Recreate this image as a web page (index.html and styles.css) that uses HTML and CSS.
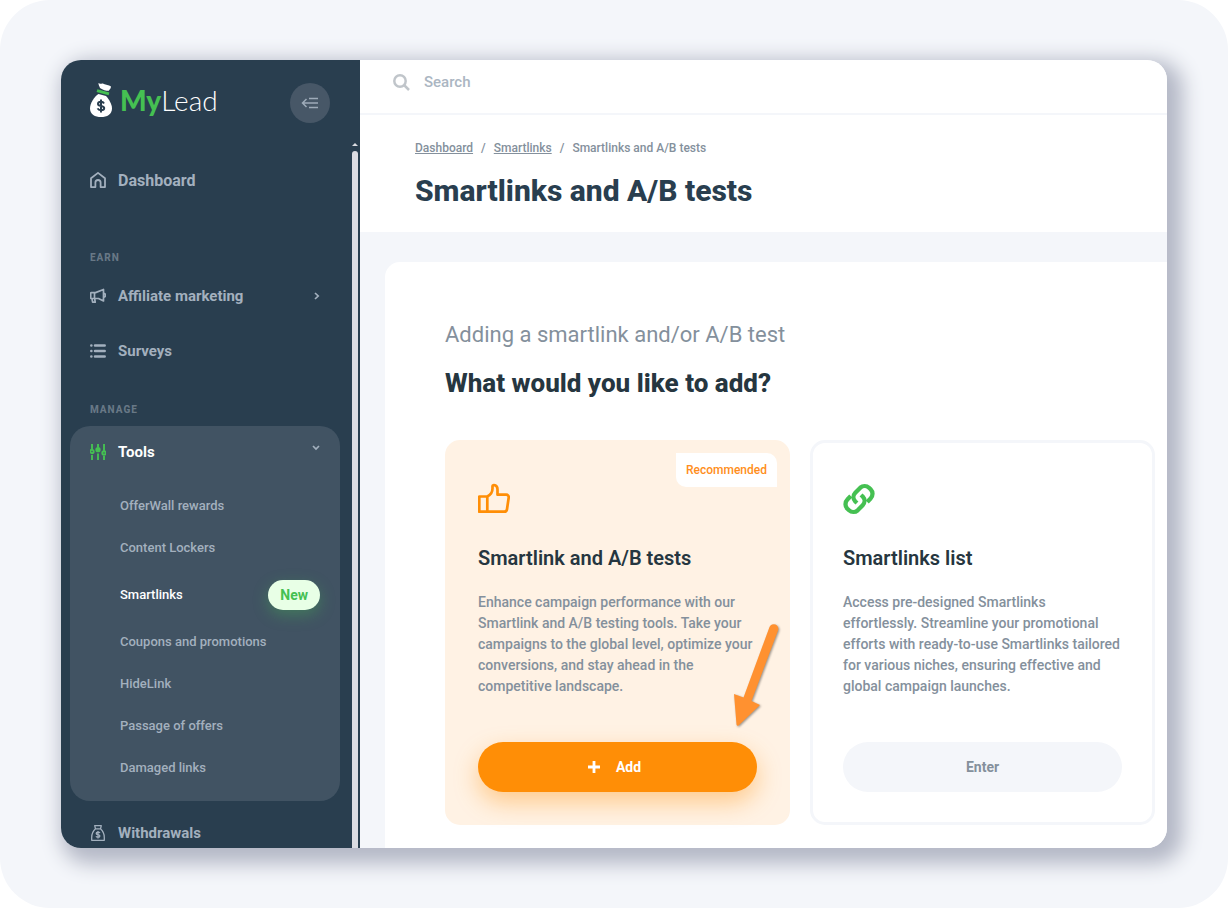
FILE: index.html
```html
<!DOCTYPE html>
<html lang="en">
<head>
  <meta charset="UTF-8">
  <meta name="viewport" content="width=device-width, initial-scale=1.0">
  <title>Smartlinks and A/B tests</title>
  <link rel="stylesheet" href="styles.css">
</head>
<body>
  <div class="backdrop">
    <div class="app">
      <aside class="sidebar">
        <div class="sidebar-head">
          <a href="#" class="logo">
            <svg width="22" height="34" viewBox="0 0 22 34">
              <path fill="#fff" d="M8.500 0c1.800 1.800 3.300-.3 5.300.9 2.200 1.200 4.700.4 7.200 2.500-.2 2.300-1.400 2.600-2.200 4.300-3 0-5.800-.6-8.800-2.800C9.800 3.200 8.300 2.300 8.500 0z"/>
              <path fill="#45c052" d="M7.400 6.200l12 3.200-.8 2.800-12-3.200z"/>
              <path fill="#fff" d="M8.500 11l7.500 2c3 3.500 6 8 6 12.500 0 6-5 8.500-11 8.500S0 31.500 0 25.500C0 20 4.500 13.500 8.500 11z"/>
              <path fill="none" stroke="#2a3e4f" stroke-width="2" d="M14 20.500c-.6-1.200-1.700-1.700-3-1.700-1.800 0-3 .9-3 2.100 0 3 6.200 1.200 6.200 4.200 0 1.300-1.300 2.200-3.200 2.200-1.600 0-2.800-.6-3.400-1.900M11 16.500v13"/>
            </svg>
            <span class="logo-text"><b>My</b>Lead</span>
          </a>
          <button type="button" class="collapse" aria-label="Collapse menu">
            <svg width="18" height="12" viewBox="0 0 18 12" fill="none" stroke="#9eabb9" stroke-width="1.500">
              <path d="M8 1.500h9M1.500 6H17M8 10.500h9M5.500 2L1.500 6l4 4"/>
            </svg>
          </button>
        </div>

        <nav class="nav">
          <a href="#" class="nav-link nav-home">
            <svg width="16" height="16" viewBox="0 0 16 16" fill="none" stroke="currentColor" stroke-width="1.800" stroke-linejoin="round">
              <path d="M1 6.300L8 .9l7 5.400v8.800h-4.400v-4.500a2.600 2.600 0 0 0-5.200 0v4.500H1z"/>
            </svg>
            Dashboard
          </a>

          <p class="nav-label">Earn</p>
          <a href="#" class="nav-link">
            <svg width="16" height="16" viewBox="0 0 16 16" fill="none" stroke="currentColor" stroke-width="1.700" stroke-linejoin="round">
              <path d="M13.500 1.500v11.500L8.500 10.500H1.300a.6.6 0 0 1-.6-.6V5.200c0-.4.300-.6.6-.6h4.200zM4.500 4.800v5.500M2 10.800l.6 3.400h2.600l-.5-3.400M14 5.300c2 .5 2 3.400 0 4"/>
            </svg>
            Affiliate marketing
            <svg class="chevron" width="6" height="8" viewBox="0 0 6 8" fill="none" stroke="currentColor" stroke-width="1.700"><path d="M1 1l3.200 3L1 7"/></svg>
          </a>
          <a href="#" class="nav-link">
            <svg width="16" height="16" viewBox="0 0 16 16" fill="none" stroke="currentColor" stroke-width="2.500" stroke-linecap="round">
              <path d="M5 2.500h9.700M5 8h9.700M5 13.500h9.700M1.300 2.500h.1M1.300 8h.1M1.300 13.500h.1"/>
            </svg>
            Surveys
          </a>

          <p class="nav-label">Manage</p>
          <div class="tools">
            <a href="#" class="nav-link active">
              <svg width="16" height="16" viewBox="0 0 16 16" fill="none" stroke="#45c052" stroke-width="1.900">
                <path d="M2 0v6M2 11V16M8 0v3.500M8 9.500V16M14 0v7M14 12V16"/>
                <circle cx="2" cy="7.500" r="1.700"/><circle cx="8" cy="5.700" r="1.700" fill="#45c052"/><circle cx="14" cy="9" r="1.700"/>
              </svg>
              Tools
              <svg class="chevron down" width="8" height="6" viewBox="0 0 8 6" fill="none" stroke="#a3b0be" stroke-width="1.700"><path d="M1 1l3 3 3-3"/></svg>
            </a>
            <ul class="subnav">
              <li><a href="#">OfferWall rewards</a></li>
              <li><a href="#">Content Lockers</a></li>
              <li><a href="#" class="active">Smartlinks <span class="badge">New</span></a></li>
              <li><a href="#">Coupons and promotions</a></li>
              <li><a href="#">HideLink</a></li>
              <li><a href="#">Passage of offers</a></li>
              <li><a href="#">Damaged links</a></li>
            </ul>
          </div>
          <a href="#" class="nav-link">
            <svg width="16" height="16" viewBox="0 0 16 16" fill="none" stroke="currentColor" stroke-width="1.300" stroke-linejoin="round">
              <path d="M5.500 3.800L4.700.7h6.600l-.8 3.100zM5.500 3.800C3 6 1.700 9 1.700 12.500v2.800h12.600v-2.800c0-3.500-1.300-6.500-3.800-8.700"/>
              <path d="M9.900 8c-.3-.6-1-.9-1.900-.9-2.300 0-2.500 2.200 0 2.500 2.600.3 2.400 2.700 0 2.700-1 0-1.700-.4-2-1M8 6v7.400"/>
            </svg>
            Withdrawals
          </a>
        </nav>
        <div class="scrollbar"></div>
      </aside>

      <main class="main">
        <div class="search">
          <svg width="17" height="17" viewBox="0 0 17 17" fill="none" stroke="#c0c5ca" stroke-width="2.500">
            <circle cx="7" cy="7" r="5.700"/><path d="M11 11l5 5"/>
          </svg>
          <input type="search" placeholder="Search" aria-label="Search">
        </div>

        <header class="page-head">
          <nav class="breadcrumbs">
            <a href="#">Dashboard</a><i>/</i><a href="#">Smartlinks</a><i>/</i><span>Smartlinks and A/B tests</span>
          </nav>
          <h1>Smartlinks and A/B tests</h1>
        </header>

        <section class="panel">
          <p class="lead">Adding a smartlink and/or A/B test</p>
          <h2>What would you like to add?</h2>

          <div class="cards">
            <article class="card recommended">
              <span class="ribbon">Recommended</span>
              <svg width="32" height="32" viewBox="0 0 32 32" fill="none" stroke="#ff8e06" stroke-width="2.700" stroke-linejoin="round">
                <path d="M1.300 13.500h8v15.200h-8zM9.300 13.500c3-1.500 5.200-4.500 5.200-8V3.200c0-2 5-1.500 5 3.300v5.200h8.800c1.500 0 2.600 1.300 2.400 2.800L29 26.200c-.2 1.500-1.400 2.500-2.900 2.500H9.300z"/>
              </svg>
              <h3>Smartlink and A/B tests</h3>
              <p>Enhance campaign performance with our Smartlink and A/B testing tools. Take your campaigns to the global level, optimize your conversions, and stay ahead in the competitive landscape.</p>
              <button type="button" class="btn btn-primary">
                <svg width="12" height="12" viewBox="0 0 12 12" fill="none" stroke="#fff" stroke-width="2.800"><path d="M6 0v12M0 6h12"/></svg>
                Add
              </button>
              <svg class="arrow" width="50" height="110" viewBox="0 0 50 110" fill="#ff9130">
                <path d="M40.500 6A4.500 4.500 0 0 1 49 9.500L22.500 80l8.500 4-21.500 20.500a1.500 1.500 0 0 1-2-1L5 73l9.500 3.500z"/>
              </svg>
            </article>

            <article class="card">
              <svg width="32" height="32" viewBox="0 0 32 32" fill="none" stroke="#45c052" stroke-width="4.300">
                <path d="M7.800 13l-3.400 3.600a6.500 6.500 0 0 0 0 9.200l1.600 1.500a6.500 6.500 0 0 0 8.700 0l5-5.100a6.200 6.200 0 0 0 0-8.700L18 12"/>
                <path d="M24.200 19l3.400-3.600a6.500 6.500 0 0 0 0-9.200L26 4.700a6.500 6.500 0 0 0-8.700 0l-5 5.100a6.200 6.200 0 0 0 0 8.700L14 20"/>
              </svg>
              <h3>Smartlinks list</h3>
              <p>Access pre-designed Smartlinks effortlessly. Streamline your promotional efforts with ready-to-use Smartlinks tailored for various niches, ensuring effective and global campaign launches.</p>
              <button type="button" class="btn">Enter</button>
            </article>
          </div>
        </section>
      </main>
    </div>
  </div>
</body>
</html>
```
FILE: styles.css
```css
* {
  box-sizing: border-box;
}
body {
  margin: 0;
  background: #fff;
  font-family: Roboto, sans-serif;
  font-weight: 500;
  color: #293e4f;
}
a {
  color: inherit;
  text-decoration: none;
}
h1, h2, h3, p, ul {
  margin: 0;
  padding: 0;
}
button {
  border: 0;
  font-family: inherit;
  cursor: pointer;
}
.backdrop {
  height: 100vh;
  padding: 60px 61px;
  border-radius: 50px;
  background: #f4f6fa;
}
.app {
  display: flex;
  height: 100%;
  border-radius: 20px;
  overflow: hidden;
  background: #f4f6fa;
  box-shadow: 8px 8px 20px 8px #b4b8c6;
}

/* Sidebar */
.sidebar {
  position: relative;
  flex: 0 0 299px;
  padding: 0 20px 0 9px;
  background: #293e4f;
  color: #a3b0be;
}
.sidebar-head {
  display: flex;
  align-items: center;
  justify-content: space-between;
  height: 85px;
  padding: 0 10px 0 20px;
}
.logo {
  display: flex;
  align-items: center;
  gap: 8px;
  padding-bottom: 5px;
}
.logo-text {
  font: 300 28px/34px Lato, sans-serif;
  color: #fff;
}
.logo-text b {
  font-weight: 900;
  color: #45c052;
}
.collapse {
  display: flex;
  align-items: center;
  justify-content: center;
  width: 40px;
  height: 40px;
  padding: 0;
  border-radius: 50%;
  background: #475767;
}
.nav {
  padding-top: 10px;
}
.nav-link {
  display: flex;
  align-items: center;
  gap: 12px;
  height: 55px;
  padding: 0 20px;
  font-size: 15px;
  font-weight: 700;
}
.nav-home {
  height: 50px;
  font-size: 16px;
}
.nav-label {
  padding: 0 20px;
  font-size: 10px;
  font-weight: 800;
  line-height: 20px;
  letter-spacing: 1px;
  text-transform: uppercase;
  color: #687886;
}
.nav-link + .nav-label {
  margin-top: 22px;
}
.nav-home + .nav-label {
  margin-top: 43px;
}
.chevron {
  margin-left: auto;
}
.tools {
  margin: 6px 0 4px;
  padding-bottom: 12px;
  border-radius: 20px;
  background: #415363;
}
.tools .nav-link {
  height: 52px;
}
.nav-link.active,
.subnav .active {
  color: #fff;
}
.chevron.down {
  margin-bottom: 8px;
}
.subnav {
  padding: 7px 20px 0 50px;
  list-style: none;
  font-size: 13px;
  line-height: 20px;
}
.subnav a {
  display: flex;
  align-items: center;
  justify-content: space-between;
  padding: 11px 0;
}
.badge {
  padding: 0 12px;
  border-radius: 15px;
  background: #e8ffe6;
  box-shadow: 0 5px 15px rgba(69, 192, 82, 0.35);
  color: #45c052;
  font-size: 14px;
  font-weight: 700;
  line-height: 30px;
}
.scrollbar {
  position: absolute;
  top: 91px;
  right: 2px;
  bottom: 0;
  width: 6px;
  border-radius: 3px 3px 0 0;
  background: #dbdce2;
}
.scrollbar::before {
  content: "";
  position: absolute;
  top: -8px;
  left: 0;
  border: 3px solid transparent;
  border-top: 0;
  border-bottom-color: #dbdce2;
}

/* Content */
.main {
  flex: 1;
  min-width: 0;
}
.search {
  display: flex;
  align-items: center;
  gap: 14px;
  height: 55px;
  padding: 0 33px 9px;
  border-bottom: 2px solid #f4f6fa;
  background: #fff;
}
.search input {
  flex: 1;
  padding: 0;
  border: 0;
  outline: 0;
  background: none;
  font: 500 15px/20px Roboto, sans-serif;
}
.search input::placeholder {
  color: #abb6c2;
}
.page-head {
  height: 117px;
  padding: 23px 55px 0;
  background: #fff;
}
.breadcrumbs {
  display: flex;
  gap: 8px;
  font-size: 12px;
  line-height: 20px;
  color: #84909c;
}
.breadcrumbs a {
  text-decoration: underline;
}
.breadcrumbs i {
  font-style: normal;
}
h1 {
  margin-top: 13px;
  font-size: 30px;
  font-weight: 800;
  line-height: 40px;
}
.panel {
  min-height: 100%;
  margin: 30px 0 0 25px;
  padding: 60px 12px 60px 60px;
  border-radius: 15px 0 0 0;
  background: #fff;
}
.lead {
  font-size: 22px;
  font-weight: 400;
  line-height: 26px;
  color: #84909c;
}
h2 {
  margin-top: 18px;
  font-size: 26px;
  font-weight: 800;
  line-height: 34px;
  color: #263640;
}
.cards {
  display: grid;
  grid-template-columns: 1fr 1fr;
  gap: 20px;
  margin-top: 40px;
}
.card {
  position: relative;
  display: flex;
  flex-direction: column;
  align-items: flex-start;
  padding: 40px 30px 30px;
  border: 3px solid #f4f6fa;
  border-radius: 15px;
}
.recommended {
  border-color: #fff2e4;
  background: #fff2e4;
}
.ribbon {
  position: absolute;
  top: 10px;
  right: 10px;
  padding: 0 10px;
  border-radius: 0 10px 0 10px;
  background: #fff;
  color: #ff8e20;
  font-size: 12px;
  line-height: 34px;
}
h3 {
  margin-top: 30px;
  font-size: 20px;
  font-weight: 600;
  line-height: 26px;
  color: #263640;
}
.card p {
  margin-top: 21px;
  font-size: 14px;
  line-height: 21px;
  color: #84909c;
}
.btn {
  display: flex;
  align-items: center;
  justify-content: center;
  gap: 16px;
  width: 100%;
  height: 50px;
  margin-top: 45px;
  border-radius: 25px;
  background: #f4f6fa;
  color: #84909c;
  font-size: 14px;
  font-weight: 700;
}
.btn-primary {
  padding-right: 12px;
  background: #ff8e06;
  box-shadow: 0 10px 25px rgba(255, 142, 6, 0.4);
  color: #fff;
}
.arrow {
  position: absolute;
  right: 8px;
  bottom: 91px;
  filter: drop-shadow(1px 1px 1px rgba(0, 0, 0, 0.4));
}
```
